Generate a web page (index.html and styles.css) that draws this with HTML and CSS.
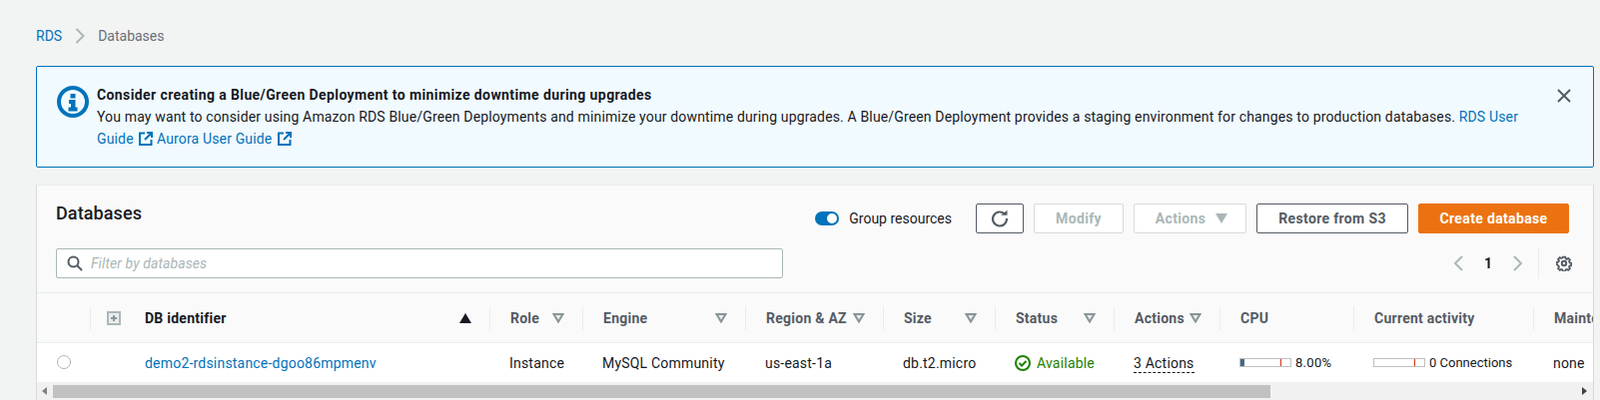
FILE: index.html
```html
<!DOCTYPE html>
<html lang="en">
<head>
    <meta charset="UTF-8">
    <title>RDS Databases</title>
    <link rel="stylesheet" href="styles.css">
</head>
<body>
    <nav class="crumbs">
        <a class="link" href="#">RDS</a>
        <svg class="crumb-sep" width="10" height="16" viewBox="0 0 10 16"><path d="M1.500 1l7 7-7 7" fill="none" stroke="#aab7b8" stroke-width="2"/></svg>
        <span class="crumb-now">Databases</span>
    </nav>

    <div class="alert">
        <svg class="alert-icon" width="32" height="32" viewBox="0 0 32 32">
            <circle cx="16" cy="16" r="14" fill="none" stroke="#0073bb" stroke-width="4"/>
            <rect x="13.500" y="8" width="5" height="4.500" fill="#0073bb"/>
            <path d="M12 14h6.500v7.500h2v4h-9v-4h2.500v-3.500h-2z" fill="#0073bb"/>
        </svg>
        <div class="alert-text">
            <strong>Consider creating a Blue/Green Deployment to minimize downtime during upgrades</strong>
            <p>You may want to consider using Amazon RDS Blue/Green Deployments and minimize your downtime during upgrades. A Blue/Green Deployment provides a staging environment for changes to production databases.
                <a class="link" href="#">RDS User Guide <svg class="ext" width="14" height="14" viewBox="0 0 14 14"><path d="M6 1.500H1v11.500h11.500V8M8 1h5v5M13 1L6 8" fill="none" stroke="#0073bb" stroke-width="2"/></svg></a>
                <a class="link" href="#">Aurora User Guide <svg class="ext" width="14" height="14" viewBox="0 0 14 14"><path d="M6 1.500H1v11.500h11.500V8M8 1h5v5M13 1L6 8" fill="none" stroke="#0073bb" stroke-width="2"/></svg></a>
            </p>
        </div>
        <svg class="alert-close" width="14" height="14" viewBox="0 0 14 14"><path d="M1 1l12 12M13 1L1 13" fill="none" stroke="#545b64" stroke-width="2"/></svg>
    </div>

    <section class="panel">
        <div class="panel-head">
            <div class="toolbar">
                <h2>Databases</h2>
                <div class="actions">
                    <span class="toggle"><span class="knob"></span></span>
                    <span class="toggle-label">Group resources</span>
                    <button class="btn btn-icon">
                        <svg width="18" height="18" viewBox="0 0 18 18"><path d="M14.300 4.900A7 7 0 1 0 16 9" fill="none" stroke="#545b64" stroke-width="2.200"/><path d="M10 5.800L16.500 0.800v5z" fill="#545b64"/></svg>
                    </button>
                    <button class="btn btn-off btn-modify">Modify</button>
                    <button class="btn btn-off btn-actions">Actions <svg width="12" height="10" viewBox="0 0 12 10"><path d="M0 0h12L6 10z" fill="#aab7b8"/></svg></button>
                    <button class="btn btn-restore">Restore from S3</button>
                    <button class="btn btn-primary">Create database</button>
                </div>
            </div>
            <div class="filter-row">
                <label class="filter">
                    <svg width="16" height="16" viewBox="0 0 16 16"><circle cx="6.500" cy="6.500" r="5" fill="none" stroke="#545b64" stroke-width="2"/><path d="M10 10l5 5" stroke="#545b64" stroke-width="2"/></svg>
                    <input type="text" placeholder="Filter by databases">
                </label>
                <div class="pager">
                    <svg width="10" height="16" viewBox="0 0 10 16"><path d="M9 1L2 8l7 7" fill="none" stroke="#aab7b8" stroke-width="2"/></svg>
                    <span class="page-num">1</span>
                    <svg width="10" height="16" viewBox="0 0 10 16"><path d="M1 1l7 7-7 7" fill="none" stroke="#aab7b8" stroke-width="2"/></svg>
                    <span class="pager-sep"></span>
                    <svg width="16" height="16" viewBox="0 0 16 16"><path d="M6.600 1h2.800l.4 1.800 1.300.6 1.600-1 1.900 1.900-1 1.600.6 1.300 1.800.4v2.800l-1.800.4-.6 1.300 1 1.600-1.900 1.900-1.600-1-1.300.6-.4 1.800H6.600l-.4-1.800-1.300-.6-1.600 1-1.900-1.900 1-1.600-.6-1.300L0 9.400V6.600l1.800-.4.600-1.300-1-1.600 1.900-1.900 1.600 1 1.300-.6z" transform="translate(0.800 0.800) scale(0.9)" fill="none" stroke="#545b64" stroke-width="2"/><circle cx="8" cy="8" r="2.200" fill="none" stroke="#545b64" stroke-width="2"/></svg>
                </div>
            </div>
        </div>

        <div class="table-wrap">
            <table>
                <colgroup>
                    <col class="c-select"><col class="c-expand"><col class="c-id"><col class="c-role"><col class="c-engine"><col class="c-region"><col class="c-size"><col class="c-status"><col class="c-actions"><col class="c-cpu"><col class="c-activity"><col class="c-maint">
                </colgroup>
                <thead>
                    <tr>
                        <th></th>
                        <th><div class="th-in th-expand"><svg width="14" height="14" viewBox="0 0 14 14"><path d="M1 1h12v12H1z" fill="#eaeded" stroke="#aab7b8" stroke-width="2"/><path d="M7 4v6M4 7h6" stroke="#879596" stroke-width="2"/></svg></div></th>
                        <th><div class="th-in th-id"><span class="dark">DB identifier</span><svg width="12" height="10" viewBox="0 0 12 10"><path d="M6 0l6 10H0z" fill="#16191f"/></svg></div></th>
                        <th><div class="th-in"><span>Role</span><svg class="funnel" width="12" height="10" viewBox="0 0 12 10"><path d="M1.500 1h9L6 8.500z"/></svg></div></th>
                        <th><div class="th-in"><span>Engine</span><svg class="funnel" width="12" height="10" viewBox="0 0 12 10"><path d="M1.500 1h9L6 8.500z"/></svg></div></th>
                        <th><div class="th-in"><span>Region &amp; AZ</span><svg class="funnel" width="12" height="10" viewBox="0 0 12 10"><path d="M1.500 1h9L6 8.500z"/></svg></div></th>
                        <th><div class="th-in"><span>Size</span><svg class="funnel" width="12" height="10" viewBox="0 0 12 10"><path d="M1.500 1h9L6 8.500z"/></svg></div></th>
                        <th><div class="th-in"><span>Status</span><svg class="funnel" width="12" height="10" viewBox="0 0 12 10"><path d="M1.500 1h9L6 8.500z"/></svg></div></th>
                        <th><div class="th-in"><span>Actions</span><svg class="funnel" width="12" height="10" viewBox="0 0 12 10"><path d="M1.500 1h9L6 8.500z"/></svg></div></th>
                        <th><div class="th-in"><span>CPU</span></div></th>
                        <th><div class="th-in"><span>Current activity</span></div></th>
                        <th><div class="th-in"><span>Maintenance</span></div></th>
                    </tr>
                </thead>
                <tbody>
                    <tr>
                        <td class="cell-radio"><span class="radio"></span></td>
                        <td></td>
                        <td class="cell-id"><a class="link" href="#">demo2-rdsinstance-dgoo86mpmenv</a></td>
                        <td>Instance</td>
                        <td>MySQL Community</td>
                        <td>us-east-1a</td>
                        <td>db.t2.micro</td>
                        <td><span class="status">
                            <svg width="16" height="16" viewBox="0 0 16 16"><circle cx="8" cy="8" r="7" fill="none" stroke="#1d8102" stroke-width="2"/><path d="M4.500 8l2.500 2.500 4.500-4.500" fill="none" stroke="#1d8102" stroke-width="2"/></svg>
                            Available</span></td>
                        <td><span class="dashed">3 Actions</span></td>
                        <td><span class="meter"><span class="bar"><span class="bar-fill"></span><span class="bar-tick"></span></span><span class="pct">8.00%</span></span></td>
                        <td><span class="meter"><span class="bar"><span class="bar-tick"></span></span><span class="conn">0 Connections</span></span></td>
                        <td>none</td>
                    </tr>
                </tbody>
            </table>
        </div>

        <div class="scrollbar">
            <svg width="6" height="8" viewBox="0 0 6 8"><path d="M5 0v8L0 4z" fill="#7f7f7f"/></svg>
            <div class="track"><div class="thumb"></div></div>
            <svg width="6" height="8" viewBox="0 0 6 8"><path d="M0 0v8l5-4z" fill="#404040"/></svg>
        </div>
    </section>
</body>
</html>
```

FILE: styles.css
```css
html, body {
    height: 401px;
    overflow: hidden;
}

body {
    box-sizing: border-box;
    margin: 0;
    padding: 26px 6px 0 36px;
    background-color: #f2f3f3;
    color: #16191f;
    font-family: Roboto, "Liberation Sans", sans-serif;
    font-size: 14px;
    line-height: 22px;
}

.link {
    color: #0073bb;
    text-decoration: none;
}

/* breadcrumbs */
.crumbs {
    display: flex;
    align-items: center;
    gap: 13px;
    height: 20px;
}

.crumb-now {
    color: #687078;
}

/* info alert */
.alert {
    display: flex;
    box-sizing: border-box;
    height: 102px;
    margin-top: 20px;
    padding: 17px 22px 17px 20px;
    border: 1px solid #0073bb;
    border-radius: 2px;
    background-color: #f1faff;
}

.alert-icon {
    flex: none;
    margin: 2px 8px 0 0;
}

.alert-text {
    flex: 1;
    padding-right: 34px;
    letter-spacing: 0.15px;
}

.alert-text strong {
    display: block;
    font-weight: 700;
    letter-spacing: 0.4px;
}

.alert-text p {
    margin: 0;
}

.ext {
    margin-left: 2px;
    vertical-align: -2px;
}

.alert-close {
    flex: none;
    margin-top: 5px;
}

/* panel */
.panel {
    height: 216px;
    margin-top: 17px;
    border: 1px solid #eaeded;
    border-left-color: #d5dbdb;
    border-right-color: #d5dbdb;
    border-bottom: 0;
    background-color: #fafafa;
}

.panel-head {
    padding: 18px 24px 14px 19px;
}

.toolbar {
    display: flex;
    justify-content: space-between;
}

.toolbar h2 {
    margin: 0;
    font-size: 18px;
    font-weight: 500;
    line-height: 20px;
    letter-spacing: 0.1px;
}

.actions {
    display: flex;
    align-items: center;
    gap: 10px;
    height: 30px;
}

.toggle {
    display: flex;
    justify-content: flex-end;
    box-sizing: border-box;
    width: 24px;
    height: 14px;
    padding: 2px;
    border-radius: 7px;
    background-color: #0073bb;
}

.knob {
    width: 10px;
    height: 10px;
    border-radius: 50%;
    background-color: #fff;
}

.toggle-label {
    margin-right: 14px;
}

.btn {
    box-sizing: border-box;
    height: 30px;
    padding: 0;
    border: 1px solid #545b64;
    border-radius: 2px;
    background-color: #fff;
    color: #545b64;
    font-family: inherit;
    font-size: 14px;
    font-weight: 700;
    letter-spacing: 0.35px;
}

.btn-icon {
    display: flex;
    align-items: center;
    justify-content: center;
    width: 48px;
}

.btn-off {
    border-color: #d5dbdb;
    color: #aab7b8;
}

.btn-modify {
    width: 90px;
}

.btn-actions {
    width: 113px;
    padding-left: 3px;
}

.btn-actions svg {
    margin-left: 6px;
}

.btn-restore {
    width: 152px;
}

.btn-primary {
    width: 151px;
    border-color: #ec7211;
    background-color: #ec7211;
    color: #fff;
}

.filter-row {
    display: flex;
    justify-content: space-between;
    margin-top: 15px;
}

.filter {
    display: flex;
    align-items: center;
    gap: 8px;
    box-sizing: border-box;
    width: 728px;
    height: 30px;
    padding-left: 10px;
    border: 1px solid #aab7b8;
    border-radius: 2px;
    background-color: #fff;
}

.filter input {
    flex: 1;
    padding: 0;
    border: 0;
    outline: 0;
    font-family: inherit;
    font-size: 14px;
    font-style: italic;
    letter-spacing: 0.1px;
}

.filter input::placeholder {
    color: #aab7b8;
}

.pager {
    display: flex;
    align-items: center;
    margin-right: -3px;
}

.page-num {
    width: 50px;
    font-weight: 700;
    text-align: center;
}

.pager-sep {
    width: 1px;
    height: 30px;
    margin: 0 17px 0 15px;
    background-color: #eaeded;
}

/* table */
.table-wrap {
    overflow: hidden;
}

table {
    width: 1750px;
    table-layout: fixed;
    border-collapse: collapse;
}

.c-select { width: 53px; }
.c-expand { width: 38px; }
.c-id { width: 362px; }
.c-role { width: 93px; }
.c-engine { width: 163px; }
.c-region { width: 138px; }
.c-size { width: 112px; }
.c-status { width: 119px; }
.c-actions { width: 106px; }
.c-cpu { width: 134px; }
.c-activity { width: 180px; }
.c-maint { width: 352px; }

th {
    height: 49px;
    padding: 0;
    border-top: 1px solid #eaeded;
    border-bottom: 1px solid #eaeded;
    color: #545b64;
    font-weight: 700;
    letter-spacing: 0.25px;
    text-align: left;
}

.th-in {
    display: flex;
    align-items: center;
    justify-content: space-between;
    box-sizing: border-box;
    height: 24px;
    padding: 0 18px 0 20px;
    border-left: 1px solid #eaeded;
    white-space: nowrap;
}

.th-expand {
    padding: 0 0 0 16px;
}

.th-id {
    padding-left: 17px;
    border-left: 0;
}

.dark {
    color: #16191f;
}

.funnel path {
    fill: #eaeded;
    stroke: #879596;
    stroke-width: 2;
}

td {
    height: 39px;
    padding: 0 0 0 20px;
    background-color: #fff;
    letter-spacing: 0.2px;
    white-space: nowrap;
}

.cell-radio {
    padding-left: 20px;
}

.cell-id {
    padding-left: 17px;
}

.radio {
    display: block;
    box-sizing: border-box;
    width: 14px;
    height: 14px;
    margin-top: -2px;
    border: 1px solid #aab7b8;
    border-radius: 50%;
    background-color: #fff;
}

.status {
    display: flex;
    align-items: center;
    gap: 6px;
    color: #1d8102;
}

.dashed {
    padding-bottom: 1px;
    border-bottom: 1px dashed #16191f;
}

.meter {
    display: flex;
    align-items: center;
    gap: 4px;
}

.bar {
    position: relative;
    flex: none;
    box-sizing: border-box;
    width: 52px;
    height: 9px;
    border: 1px solid #bfbfbf;
    background-color: #fff;
}

.bar-fill {
    position: absolute;
    top: 0;
    bottom: 0;
    left: 0;
    width: 4px;
    background-color: #44688c;
}

.bar-tick {
    position: absolute;
    top: 0;
    bottom: 0;
    left: 40px;
    width: 1px;
    background-color: #d13212;
}

.pct {
    font-size: 13px;
    letter-spacing: 0.3px;
}

.conn {
    font-size: 13px;
    letter-spacing: 0;
}

/* horizontal scrollbar */
.scrollbar {
    display: flex;
    align-items: center;
    gap: 5px;
    height: 18px;
    padding: 0 5px;
    background-color: #f1f1f1;
}

.track {
    flex: 1;
}

.thumb {
    width: 1219px;
    height: 13px;
    background-color: #c1c1c1;
}
```
